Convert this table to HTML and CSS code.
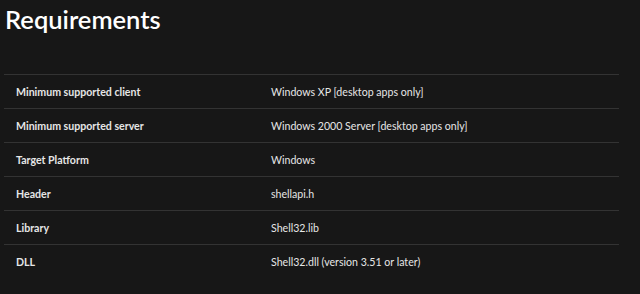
FILE: index.html
```html
<!DOCTYPE html>
<html lang="en">
<head>
    <meta charset="UTF-8">
    <meta name="viewport" content="width=device-width, initial-scale=1.0">
    <title>Requirements</title>
    <link rel="stylesheet" href="styles.css">
</head>
<body>
    <div class="content">
        <h2>Requirements</h2>
        <table class="req-table">
            <tbody>
                <tr>
                    <th>Minimum supported client</th>
                    <td>Windows XP [desktop apps only]</td>
                </tr>
                <tr>
                    <th>Minimum supported server</th>
                    <td>Windows 2000 Server [desktop apps only]</td>
                </tr>
                <tr>
                    <th>Target Platform</th>
                    <td>Windows</td>
                </tr>
                <tr>
                    <th>Header</th>
                    <td>shellapi.h</td>
                </tr>
                <tr>
                    <th>Library</th>
                    <td>Shell32.lib</td>
                </tr>
                <tr>
                    <th>DLL</th>
                    <td>Shell32.dll (version 3.51 or later)</td>
                </tr>
            </tbody>
        </table>
    </div>
</body>
</html>
```

FILE: styles.css
```css
body {
    margin: 0;
    background-color: #171717;
    color: #e6e6e6;
    font-family: Lato, "Open Sans", sans-serif;
}
.content {
    padding: 0 21px 0 4px;
}
h2 {
    margin: 0;
    padding: 1px 0 0 1px;
    height: 73px;
    font-size: 25.5px;
    font-weight: 600;
    color: #ffffff;
    line-height: 36px;
}
.req-table {
    width: 100%;
    border-collapse: collapse;
    font-size: 10.6px;
}
.req-table tr {
    border-top: 1px solid #333333;
}
.req-table th,
.req-table td {
    height: 33px;
    padding: 0 12px;
    text-align: left;
    vertical-align: middle;
}
.req-table th {
    width: 231px;
    font-weight: 700;
}
```
